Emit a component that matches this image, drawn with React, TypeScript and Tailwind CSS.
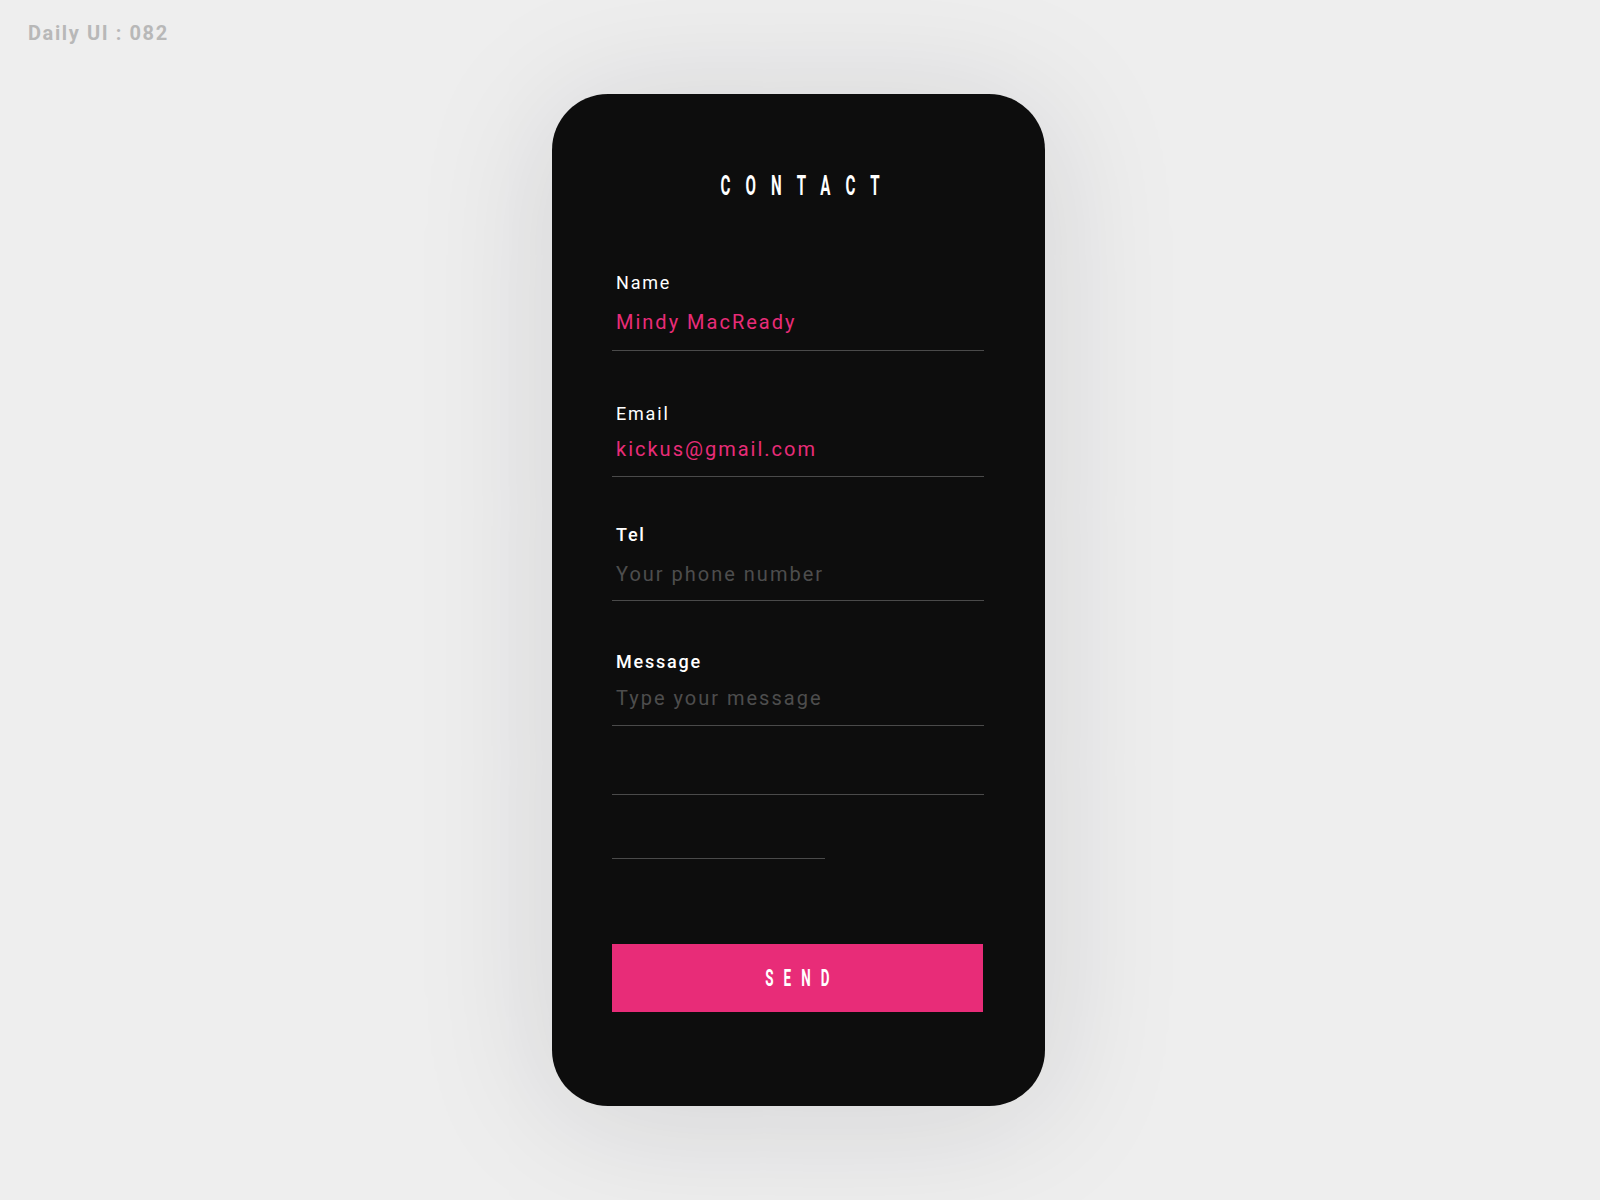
import React from 'react';

// --- Contact form field ---

interface FieldProps {
    label: string;
    value?: string;
    placeholder?: string;
    wrapClass: string;
    labelClass: string;
    valueClass: string;
}

const Field: React.FC<FieldProps> = ({ label, value, placeholder, wrapClass, labelClass, valueClass }) => {
    return (
        <div className={`border-b border-[#4a4a4a] pl-[4px] ${wrapClass}`}>
            <div className={`text-[18px] leading-[22px] tracking-[0.1em] text-white ${labelClass}`}>{label}</div>
            <div
                className={`text-[20px] leading-[24px] tracking-[0.1em] whitespace-nowrap ${valueClass} ${value ? 'text-[#e82c78]' : 'text-[#4d4d4d]'}`}
            >
                {value || placeholder}
            </div>
        </div>
    );
};

export default function App() {
    return (
        <div className="min-h-[1200px] w-full bg-[#eeeeee] font-['Roboto','Noto_Sans',sans-serif] flex flex-col">
            <div className="pl-[28px] pt-[21px] text-[20px] leading-[24px] font-bold tracking-[0.08em] text-[#b8b8b8]">
                Daily UI : 082
            </div>

            <div className="flex justify-center mt-[49px]">
                <div className="mr-[3px] w-[493px] bg-[#0d0d0d] rounded-[56px] pl-[60px] pr-[61px] pt-[76px] pb-[94px] shadow-[0_10px_140px_rgba(20,20,40,0.13)]">
                    <div className="flex justify-center pl-[5px]">
                        <span className="inline-block scale-x-[0.56] pl-[27px] text-[27px] leading-[32px] font-bold tracking-[27px] text-white">
                            CONTACT
                        </span>
                    </div>

                    <Field
                        label="Name"
                        value="Mindy MacReady"
                        wrapClass="mt-[70px] pb-[16px]"
                        labelClass="font-normal"
                        valueClass="mt-[16px]"
                    />
                    <Field
                        label="Email"
                        value="kickus@gmail.com"
                        wrapClass="mt-[52px] pb-[15px]"
                        labelClass="font-normal"
                        valueClass="mt-[12px]"
                    />
                    <Field
                        label="Tel"
                        placeholder="Your phone number"
                        wrapClass="mt-[47px] pb-[14px]"
                        labelClass="font-medium"
                        valueClass="mt-[16px]"
                    />
                    <Field
                        label="Message"
                        placeholder="Type your message"
                        wrapClass="mt-[50px] pb-[15px]"
                        labelClass="font-medium"
                        valueClass="mt-[13px]"
                    />
                    <div className="h-[69px] border-b border-[#4a4a4a]" />
                    <div className="h-[64px] w-[213px] border-b border-[#4a4a4a]" />

                    <button className="mt-[85px] w-[371px] h-[68px] bg-[#e82c78] flex items-center justify-center">
                        <span className="inline-block scale-x-[0.56] pl-[18px] text-[24px] leading-[68px] font-bold tracking-[18px] text-white">
                            SEND
                        </span>
                    </button>
                </div>
            </div>
        </div>
    );
}
